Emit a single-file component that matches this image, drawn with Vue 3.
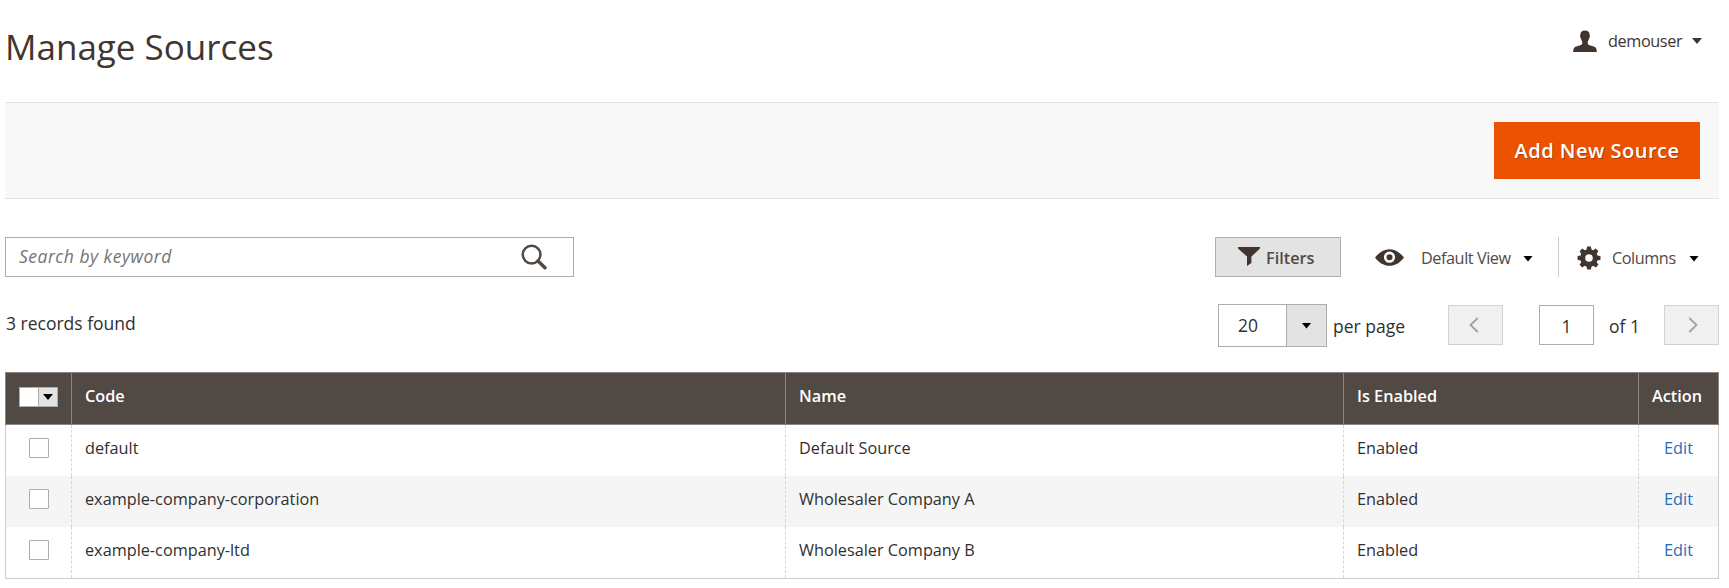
<template>
  <div class="page">
    <header class="page-header">
      <h1 class="page-title">Manage Sources</h1>
      <div class="user">
        <svg class="user-icon" width="24" height="23" viewBox="0 0 24 23">
          <path
            d="M12 0.5 C15 0.5 16.8 2.2 16.6 5 C17.2 5.3 17 7.6 16.2 8 C16 9.6 15.3 10.6 14.8 11.2 V14 C16 15.6 20.5 16 22.3 17.3 C23.6 18.3 23.7 20 23.8 22 H0.2 C0.3 20 0.4 18.3 1.7 17.3 C3.5 16 8 15.6 9.2 14 V11.2 C8.7 10.6 8 9.6 7.8 8 C7 7.6 6.8 5.3 7.4 5 C7.2 2.2 9 0.5 12 0.5 Z"
          />
        </svg>
        <span class="user-name">demouser</span>
        <span class="caret caret-user"></span>
      </div>
    </header>

    <div class="page-actions">
      <button class="primary">Add New Source</button>
    </div>

    <div class="toolbar">
      <div class="search">
        <span class="search-placeholder">Search by keyword</span>
        <svg class="search-icon" width="26" height="26" viewBox="0 0 26 26">
          <circle cx="10.6" cy="10.6" r="8.9" />
          <path d="M17 17 L24 23.8" />
        </svg>
      </div>

      <div class="tools">
        <button class="filters">
          <svg width="22" height="19" viewBox="0 0 22 19">
            <path d="M0 0 H22 V1.4 L13.4 9.6 V16 L9 19 V9.6 L0 1.4 Z" />
          </svg>
          <span>Filters</span>
        </button>
        <div class="view">
          <svg class="eye" width="29" height="17" viewBox="0 0 29 17">
            <path d="M0 8.5 C4 3.2 9 0.2 14.5 0.2 S25 3.2 29 8.5 C25 13.8 20 16.8 14.5 16.8 S4 13.8 0 8.5 Z" />
            <circle class="eye-ring" cx="14.5" cy="8.2" r="4.3" />
          </svg>
          <span class="view-label">Default View</span>
          <span class="caret"></span>
        </div>
        <div class="columns">
          <svg class="gear" width="24" height="24" viewBox="-12 -12 24 24">
            <circle r="6.3" />
            <path v-for="angle in teeth" :key="angle" :transform="`rotate(${angle})`" d="M-2.8 -7.5 L-1.8 -11.5 H1.8 L2.8 -7.5 Z" />
          </svg>
          <span class="columns-label">Columns</span>
          <span class="caret"></span>
        </div>
      </div>
    </div>

    <div class="paging">
      <div class="records">3 records found</div>
      <div class="page-size">
        <span class="page-size-value">20</span>
        <span class="page-size-toggle"><i class="caret"></i></span>
      </div>
      <span class="per-page">per page</span>
      <button class="nav prev">
        <svg width="10" height="16" viewBox="0 0 10 16"><path d="M8.7 1 L1.5 8 L8.7 15" /></svg>
      </button>
      <div class="page-input">1</div>
      <span class="page-total">of 1</span>
      <button class="nav next">
        <svg width="10" height="16" viewBox="0 0 10 16"><path d="M1.3 1 L8.5 8 L1.3 15" /></svg>
      </button>
    </div>

    <div class="grid">
      <div class="row head">
        <div class="cell check">
          <span class="multicheck">
            <i class="multicheck-box"></i>
            <i class="multicheck-toggle"><b class="caret"></b></i>
          </span>
        </div>
        <div class="cell">Code</div>
        <div class="cell">Name</div>
        <div class="cell">Is Enabled</div>
        <div class="cell">Action</div>
      </div>
      <div v-for="source in sources" :key="source.code" class="row">
        <div class="cell check"><span class="checkbox"></span></div>
        <div class="cell">{{ source.code }}</div>
        <div class="cell">{{ source.name }}</div>
        <div class="cell">{{ source.status }}</div>
        <div class="cell action"><a>Edit</a></div>
      </div>
    </div>
  </div>
</template>

<script setup>
const sources = [
  { code: 'default', name: 'Default Source', status: 'Enabled' },
  { code: 'example-company-corporation', name: 'Wholesaler Company A', status: 'Enabled' },
  { code: 'example-company-ltd', name: 'Wholesaler Company B', status: 'Enabled' }
];

const teeth = [0, 45, 90, 135, 180, 225, 270, 315];
</script>

<style>
body {
  background: #fff;
}
</style>

<style scoped>
.page {
  box-sizing: border-box;
  width: 1729px;
  height: 588px;
  padding: 0 10px 0 5px;
  overflow: hidden;
  font-family: 'Open Sans', 'Noto Sans', sans-serif;
  font-size: 16.25px;
  color: #303030;
}

.page *,
.page *::before {
  box-sizing: border-box;
}

button {
  margin: 0;
  padding: 0;
  border: 0;
  font-family: inherit;
  cursor: pointer;
}

.caret {
  display: block;
  flex: none;
  width: 10px;
  height: 6px;
  background: #000;
  clip-path: polygon(0 0, 100% 0, 50% 100%);
}

.page-header {
  display: flex;
  justify-content: space-between;
  height: 102px;
}

.page-title {
  margin: 23px 0 0;
  font-size: 35px;
  font-weight: 400;
  line-height: 48px;
  color: #41362f;
}

.user {
  display: flex;
  align-items: center;
  height: 22px;
  margin: 30px 17px 0 0;
  color: #41362f;
}

.user-icon {
  fill: #41362f;
}

.user-name {
  width: 74px;
  margin-left: 11px;
  letter-spacing: -0.4px;
}

.caret-user {
  margin-left: 10px;
  background: #41362f;
}

.page-actions {
  display: flex;
  justify-content: flex-end;
  align-items: center;
  height: 97px;
  padding-right: 19px;
  background: #f8f8f8;
  border-top: 1px solid #e3e3e3;
  border-bottom: 1px solid #e3e3e3;
}

.primary {
  width: 206px;
  height: 57px;
  background: #eb5202;
  color: #fff;
  font-size: 20px;
  font-weight: 600;
  letter-spacing: 0.5px;
  text-shadow: 1px 1px 0 rgba(0, 0, 0, 0.25);
}

.toolbar {
  display: flex;
  justify-content: space-between;
  height: 40px;
  margin-top: 38px;
}

.search {
  display: flex;
  align-items: center;
  justify-content: space-between;
  width: 569px;
  padding: 0 26px 0 13px;
  border: 1px solid #adadad;
}

.search-placeholder {
  font-size: 17.5px;
  font-style: italic;
  line-height: 24px;
  padding-bottom: 2px;
  letter-spacing: 0.5px;
  color: #757575;
}

.search-icon {
  fill: none;
  stroke: #514943;
  stroke-width: 2.5;
}

.search-icon path {
  stroke-width: 3.4;
  stroke-linecap: round;
}

.tools {
  display: flex;
}

.filters {
  display: flex;
  align-items: center;
  width: 126px;
  padding: 0 0 0 22px;
  border: 1px solid #adadad;
  background: #e3e3e3;
  color: #514943;
  font-size: 16.25px;
  font-weight: 600;
}

.filters svg {
  margin: 0 6px 1px 0;
  fill: #41362f;
}

.filters span {
  padding-top: 2px;
}

.view {
  display: flex;
  align-items: center;
  width: 217px;
  padding-left: 34px;
}

.eye {
  fill: #41362f;
}

.eye-ring {
  fill: #41362f;
  stroke: #fff;
  stroke-width: 2.6;
}

.view-label,
.columns-label {
  padding-top: 2px;
  letter-spacing: -0.45px;
  white-space: nowrap;
  color: #514943;
}

.view-label {
  width: 90px;
  margin: 0 12px 0 17px;
}

.view .caret,
.columns .caret {
  margin-top: 3px;
}

.columns {
  display: flex;
  align-items: center;
  width: 161px;
  padding-left: 18px;
  border-left: 1px solid #ccc;
}

.gear {
  margin-top: 1px;
  fill: #41362f;
}

.gear circle {
  fill: none;
  stroke: #41362f;
  stroke-width: 5;
}

.columns-label {
  width: 64px;
  margin: 0 13px 0 11px;
}

.paging {
  display: flex;
  align-items: center;
  height: 43px;
  margin-top: 27px;
  font-size: 17.5px;
}

.records {
  width: 1213px;
  padding: 0 0 5px 1px;
}

.page-size {
  display: flex;
  width: 109px;
  height: 43px;
  border: 1px solid #adadad;
}

.page-size-value {
  width: 67px;
  padding-left: 19px;
  line-height: 41px;
}

.page-size-toggle {
  display: flex;
  flex: 1;
  align-items: center;
  justify-content: center;
  background: #e3e3e3;
  border-left: 1px solid #adadad;
}

.per-page {
  width: 115px;
  margin-left: 6px;
}

.nav {
  display: flex;
  align-items: center;
  justify-content: center;
  width: 55px;
  height: 40px;
  margin-bottom: 1px;
  background: #f0f0f0;
  border: 1px solid #d1d1d1;
}

.nav.prev {
  padding-right: 3px;
}

.nav.next {
  padding-left: 3px;
}

.nav svg {
  margin-bottom: 1px;
  fill: none;
  stroke: #a3a09e;
  stroke-width: 1.8;
}

.page-input {
  width: 55px;
  height: 40px;
  margin: 0 0 1px 36px;
  border: 1px solid #adadad;
  line-height: 40px;
  text-align: center;
}

.page-total {
  width: 55px;
  margin-left: 15px;
}

.grid {
  margin-top: 25px;
  border: 1px solid #ccc;
  border-top: 0;
}

.row {
  display: grid;
  grid-template-columns: 65px 714px 558px 295px 1fr;
  height: 51px;
}

.row:nth-child(odd):not(.head) {
  background: #f5f5f5;
}

.cell {
  padding: 12px 0 0 13px;
  border-left: 1px dashed #d6d6d6;
  line-height: 22px;
}

.cell:first-child {
  border-left: 0;
}

.check {
  display: flex;
  padding: 13px 0 0 23px;
}

.checkbox {
  width: 20px;
  height: 20px;
  border: 1px solid #adadad;
  border-radius: 1px;
  background: #fff;
}

.action {
  padding-left: 0;
  text-align: center;
}

.action a {
  color: #1a6fc0;
}

.head {
  height: 53px;
  margin: 0 -1px;
  background: #514943;
  border: 1px solid #8a837f;
  color: #fff;
  font-weight: 600;
}

.head .cell {
  border-left: 1px solid #8a837f;
}

.head .cell:first-child {
  border-left: 0;
}

.head .check {
  padding: 14px 0 0 13px;
}

.multicheck {
  display: flex;
  width: 39px;
  height: 20px;
  border: 1px solid #adadad;
  background: #fff;
}

.multicheck-box {
  width: 18px;
}

.multicheck-toggle {
  display: flex;
  flex: 1;
  align-items: center;
  justify-content: center;
  border-left: 1px solid #adadad;
  background: #e3e3e3;
}
</style>
